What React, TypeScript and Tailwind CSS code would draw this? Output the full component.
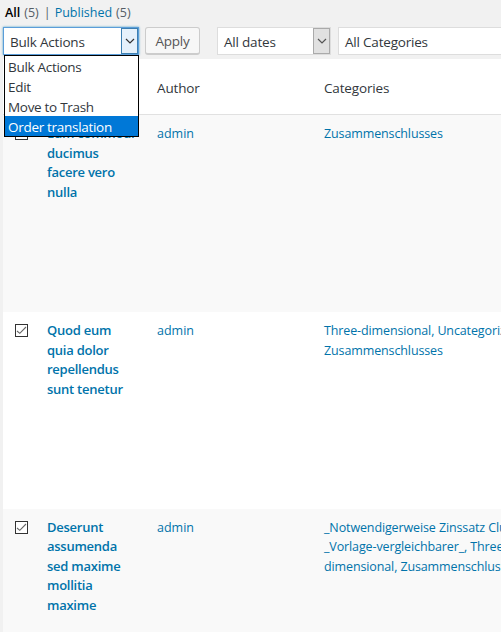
const font = "font-['Open_Sans','Noto_Sans',sans-serif]";

function Check({ checked }: { checked: boolean }) {
  return (
    <span className="flex h-[13px] w-[13px] items-center justify-center border border-[#333] bg-white">
      {checked && (
        <svg width="11" height="11" viewBox="0 0 11 11" fill="none" stroke="#666" strokeWidth="1.1">
          <path d="M1 6l2.8 2.3L10 2" />
        </svg>
      )}
    </span>
  );
}

function Row({ title, categories, odd, height }: { title: string[]; categories: string[]; odd: boolean; height: string }) {
  return (
    <div className={`flex shrink-0 overflow-hidden pt-[9px] text-[12.5px] leading-[19.5px] tracking-[-0.12px] ${height} ${odd ? 'bg-[#f9f9f9]' : 'bg-white'}`}>
      <div className="w-[44px] shrink-0 pl-[12px] pt-[3px]">
        <Check checked />
      </div>
      <div className="w-[110px] shrink-0 text-[13px] font-semibold tracking-[-0.25px] text-[#0073aa]">
        {title.map((t) => (
          <div key={t}>{t}</div>
        ))}
      </div>
      <div className="w-[167px] shrink-0 tracking-normal text-[#0073aa]">admin</div>
      <div className="min-w-0 flex-1 whitespace-nowrap text-[#0073aa]">
        {categories.map((c) => (
          <div key={c}>{c}</div>
        ))}
      </div>
    </div>
  );
}

export default function App() {
  return (
    <div className={`relative h-[632px] w-[501px] overflow-hidden bg-[#f1f1f1] text-[14px] text-[#444] ${font}`}>
      <div className="flex h-[27px] items-center pl-[5px] text-[12.5px]">
        <span className="font-semibold text-black">All</span>
        <span className="ml-1 text-[#555d66]">(5)</span>
        <span className="ml-[5px] mr-[4px] text-[#555d66]">|</span>
        <span className="text-[#0073aa]">Published</span>
        <span className="ml-1 text-[#555d66]">(5)</span>
      </div>

      <div className="flex h-[32px] items-start text-[13.5px] tracking-[-0.2px]">
        <div className="ml-[145px] flex h-[28px] w-[55px] items-center justify-center rounded-[3px] border border-[#ccc] border-b-2 bg-[#f7f7f7] pt-[1px] text-[#555]">
          Apply
        </div>
        <div className="ml-[17px] flex h-[28px] w-[114px] items-center border border-[#ddd] bg-white pl-[6px] text-[#32373c]">
          <span className="flex-1 pt-[2px]">All dates</span>
          <span className="flex h-[26px] w-[17px] items-center justify-center border border-[#aaa] bg-[#e1e1e1]">
            <svg width="10" height="6" viewBox="0 0 10 6" fill="none" stroke="#555" strokeWidth="1.2">
              <path d="M1 1l4 4 4-4" />
            </svg>
          </span>
        </div>
        <div className="ml-[7px] flex h-[28px] flex-1 items-center border border-[#ddd] border-r-0 bg-white pl-[6px] pt-[2px] text-[#32373c]">
          All Categories
        </div>
      </div>

      <div className="ml-[3px] flex flex-col">
        <div className="flex h-[56px] shrink-0 items-center border-b border-[#e1e1e1] bg-white pt-[4px] text-[13.5px] tracking-[-0.15px] text-[#32373c]">
          <div className="w-[154px] shrink-0" />
          <div className="w-[167px] shrink-0">Author</div>
          <div>Categories</div>
        </div>
        <Row odd height="h-[197px]" title={['Eum commodi', 'ducimus', 'facere vero', 'nulla']} categories={['Zusammenschlusses']} />
        <Row odd={false} height="h-[196.5px]" title={['Quod eum', 'quia dolor', 'repellendus', 'sunt tenetur']} categories={['Three-dimensional, Uncategorized,', 'Zusammenschlusses']} />
        <Row odd height="h-[197px]" title={['Deserunt', 'assumenda', 'sed maxime', 'mollitia', 'maxime']} categories={['_Notwendigerweise Zinssatz Club_,', '_Vorlage-vergleichbarer_, Three-', 'dimensional, Zusammenschlusses']} />
      </div>

      <div className="absolute left-[3px] top-[27px] flex h-[28px] w-[136px] items-center border border-[#5b9dd9] bg-white pl-[6px] text-[13.5px] tracking-[-0.2px] text-[#32373c] shadow-[0_0_2px_rgba(30,140,190,0.8)]">
        <span className="flex-1 pt-[2px]">Bulk Actions</span>
        <span className="flex h-[26px] w-[17px] items-center justify-center border border-[#3c7fb1] bg-[#e5f1fb]">
          <svg width="10" height="6" viewBox="0 0 10 6" fill="none" stroke="#333" strokeWidth="1.2">
            <path d="M1 1l4 4 4-4" />
          </svg>
        </span>
      </div>

      <div className="absolute left-[4px] top-[55px] w-[135px] border border-black bg-white pt-[1px] text-[13.5px] leading-[20px] tracking-[-0.3px] text-[#32373c]">
        <div className="pl-[3px]">Bulk Actions</div>
        <div className="pl-[3px]">Edit</div>
        <div className="pl-[3px]">Move to Trash</div>
        <div className="-mt-[1px] h-[20px] bg-[#0078d7] pl-[3px] pt-[1px] text-white">Order translation</div>
      </div>
    </div>
  );
}
